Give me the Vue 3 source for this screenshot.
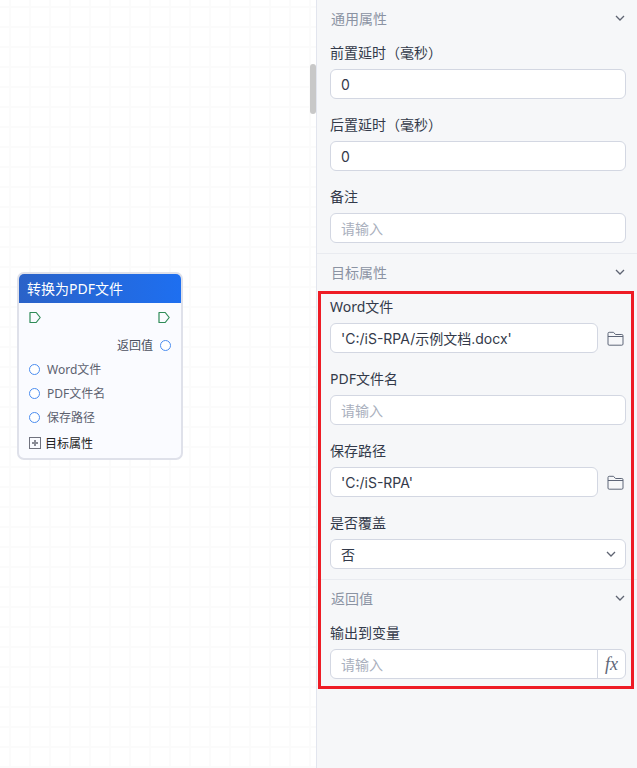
<script setup>
</script>

<template>
  <div class="page">
    <div class="canvas">
      <div class="node">
        <div class="node-title">转换为PDF文件</div>
        <div class="node-body">
          <div class="row flow-row">
            <svg class="flow" width="13" height="13" viewBox="0 0 13 13"><path d="M1 1.500h6.200l4 5-4 5H1z" fill="none" stroke="#2e8b57" stroke-width="1.200" stroke-linejoin="round"/></svg>
            <svg class="flow" width="13" height="13" viewBox="0 0 13 13"><path d="M1 1.500h6.200l4 5-4 5H1z" fill="none" stroke="#2e8b57" stroke-width="1.200" stroke-linejoin="round"/></svg>
          </div>
          <div class="row out"><span>返回值</span><i class="port"></i></div>
          <div class="row in"><i class="port"></i><span>Word文件</span></div>
          <div class="row in"><i class="port"></i><span>PDF文件名</span></div>
          <div class="row in"><i class="port"></i><span>保存路径</span></div>
          <div class="row group"><i class="plus"></i><span>目标属性</span></div>
        </div>
      </div>
      <div class="scrollbar"></div>
    </div>

    <aside class="panel">
      <section class="sec">
        <header class="sec-head"><span>通用属性</span><svg class="chev" width="12" height="12" viewBox="0 0 12 12"><path d="M2 4l4 4 4-4" /></svg></header>
        <div class="field"><label>前置延时（毫秒）</label><div class="box"><span class="val">0</span></div></div>
        <div class="field"><label>后置延时（毫秒）</label><div class="box"><span class="val">0</span></div></div>
        <div class="field"><label>备注</label><div class="box"><span class="ph">请输入</span></div></div>
      </section>
      <section class="sec">
        <header class="sec-head"><span>目标属性</span><svg class="chev" width="12" height="12" viewBox="0 0 12 12"><path d="M2 4l4 4 4-4" /></svg></header>
        <div class="field"><label>Word文件</label>
          <div class="with-icon"><div class="box"><span class="val">'C:/iS-RPA/示例文档.docx'</span></div>
            <svg class="folder" width="17" height="15" viewBox="0 0 17 15"><path d="M1 13V2.500A1.200 1.200 0 0 1 2.200 1.300h4.300l2 2.200h6.300a1.200 1.200 0 0 1 1.200 1.200v8.300a1.200 1.200 0 0 1-1.200 1.200H2.200A1.200 1.200 0 0 1 1 13zM1 5.500h15"/></svg></div></div>
        <div class="field"><label>PDF文件名</label><div class="box"><span class="ph">请输入</span></div></div>
        <div class="field"><label>保存路径</label>
          <div class="with-icon"><div class="box"><span class="val">'C:/iS-RPA'</span></div>
            <svg class="folder" width="17" height="15" viewBox="0 0 17 15"><path d="M1 13V2.500A1.200 1.200 0 0 1 2.200 1.300h4.300l2 2.200h6.300a1.200 1.200 0 0 1 1.200 1.200v8.300a1.200 1.200 0 0 1-1.200 1.200H2.200A1.200 1.200 0 0 1 1 13zM1 5.500h15"/></svg></div></div>
        <div class="field"><label>是否覆盖</label><div class="box select"><span class="val">否</span><svg class="chev" width="12" height="12" viewBox="0 0 12 12"><path d="M2 4l4 4 4-4" /></svg></div></div>
      </section>
      <section class="sec">
        <header class="sec-head"><span>返回值</span><svg class="chev" width="12" height="12" viewBox="0 0 12 12"><path d="M2 4l4 4 4-4" /></svg></header>
        <div class="field"><label>输出到变量</label><div class="box fx-box"><span class="ph">请输入</span><span class="fx">fx</span></div></div>
      </section>
      <div class="mark"></div>
    </aside>
  </div>
</template>

<style>
html, body { margin: 0; padding: 0; background: #fff; }
</style>

<style scoped>
.page {
  width: 637px; height: 768px; display: flex; overflow: hidden;
  font-family: "Noto Sans", "Noto Sans CJK SC", sans-serif;
  font-size: 14px; color: #333a4a; position: relative;
}
.canvas {
  width: 316px; flex: none; position: relative; background-color: #fff;
  background-image:
    linear-gradient(#fbfbfb 2px, transparent 2px),
    linear-gradient(90deg, #fbfbfb 2px, transparent 2px);
  background-size: 20px 20px;
  background-position: 9px 6px;
}
.scrollbar {
  position: absolute; left: 310px; top: 64px; width: 6px; height: 50px;
  background: #c8c8c8; border-radius: 3px;
}
.node {
  position: absolute; left: 17px; top: 272px; width: 162px; height: 184px;
  border: 2px solid #dfe1ea; border-radius: 7px; background: #fafbff; overflow: hidden;
}
.node-title {
  height: 29px; line-height: 29px; padding-left: 8px; color: #fff; font-size: 14px;
  background: linear-gradient(90deg, #2a62c8, #1e6ff0);
}
.node-body { padding: 0 10px; }
.row { display: flex; align-items: center; height: 24px; font-size: 12px; color: #5d6270; }
.flow-row { justify-content: space-between; height: 27px; margin-top: 1px; }
.flow { display: block; }
.out { justify-content: flex-end; gap: 7px; margin-top: 2px; color: #4c5160; }
.in { gap: 7px; }
.port {
  display: block; width: 11px; height: 11px; flex: none; border-radius: 50%;
  border: 1.200px solid #4b8df0; background: #fff; box-sizing: border-box;
}
.group { color: #222; gap: 4px; height: 28px; }
.plus {
  display: block; width: 12px; height: 12px; border: 1px solid #70727e; box-sizing: border-box; flex: none;
  background:
    linear-gradient(#8a8c96, #8a8c96) center / 6px 2px no-repeat,
    linear-gradient(#8a8c96, #8a8c96) center / 2px 6px no-repeat;
}
.panel {
  flex: 1; background: #f6f7f9; border-left: 1px solid #e2e5ee; position: relative;
}
.sec { border-bottom: 1px solid #e9ebf0; padding: 0 11px 10px 13px; }
.sec:last-of-type { border-bottom: 0; }
.sec-head {
  height: 38px; box-sizing: border-box; padding-bottom: 2px; display: flex; justify-content: space-between; align-items: center;
  color: #8b93a3; margin-bottom: 4px;
}
.sec-head span { padding-left: 1px; }
.chev { display: block; flex: none; }
.chev path { fill: none; stroke: #5f6472; stroke-width: 1.300; }
.field { margin-bottom: 15px; }
.sec .field:last-child { margin-bottom: 0; }
.field label { display: block; height: 22px; line-height: 22px; margin-bottom: 5px; color: #333a4a; }
.box {
  height: 30px; box-sizing: border-box; flex: 1;
  border: 1px solid #d3d7e2; border-radius: 6px; background: #fff;
  display: flex; align-items: center; padding: 0 10px;
}
.val { color: #333a4a; font-family: Inter, "Noto Sans CJK SC", sans-serif; }
.ph { color: #a9afbd; }
.with-icon { display: flex; align-items: center; gap: 9px; }
.folder { flex: none; margin-right: 2px; }
.folder path { fill: none; stroke: #5e6678; stroke-width: 1; }
.select { justify-content: space-between; padding-right: 8px; }
.fx-box { padding-right: 0; justify-content: space-between; }
.fx {
  width: 28px; height: 100%; border-left: 1px solid #d3d7e2; display: flex; align-items: center; justify-content: center;
  font-family: "Liberation Serif", serif; font-style: italic; font-size: 18px; color: #5e6678; box-sizing: border-box;
}
.mark {
  position: absolute; left: 1px; top: 291px; width: 316px; height: 398px; box-sizing: border-box;
  border: 3px solid #ee1c25; pointer-events: none;
}
</style>
